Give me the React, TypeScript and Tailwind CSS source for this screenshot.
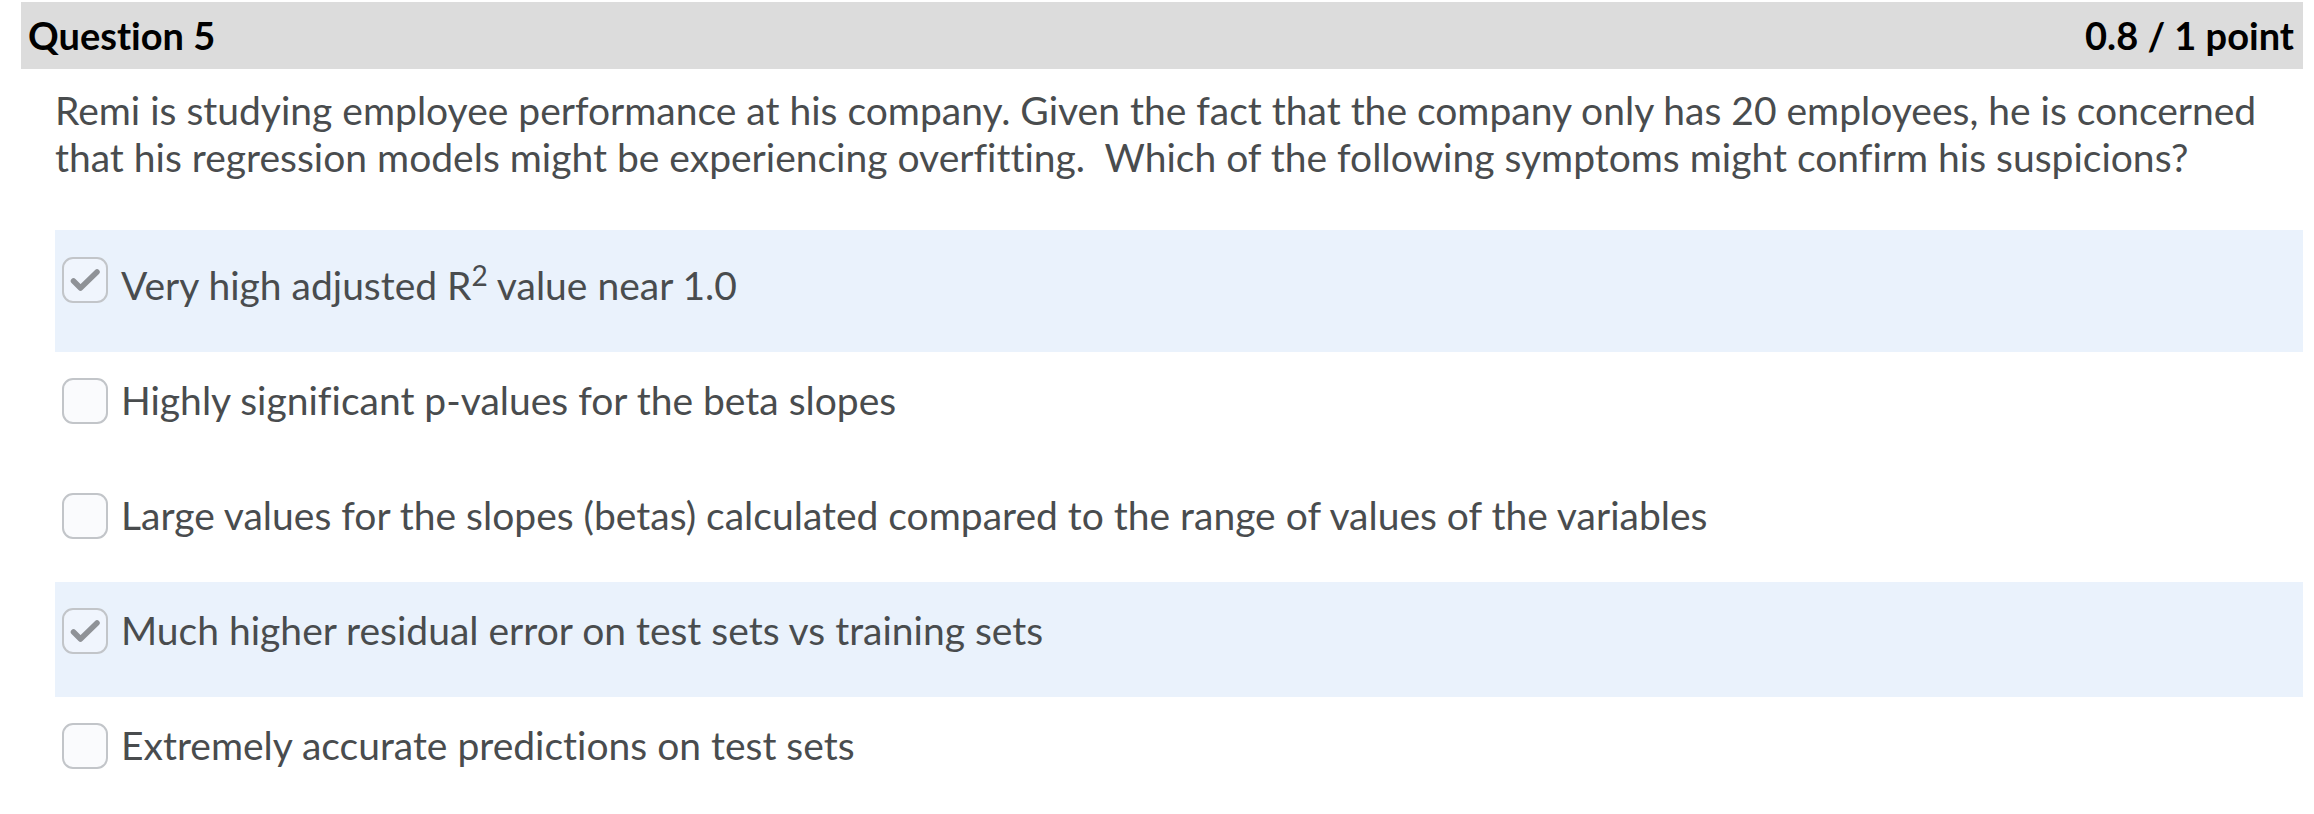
import React from "react";

function Check({ checked }: { checked: boolean }) {
  return (
    <div
      className={
        "flex h-[46px] w-[46px] shrink-0 items-center justify-center rounded-[11px] border-2 border-[#c2c5c9] " +
        (checked ? "bg-[#f0f5fd]" : "bg-[#fafbfd]")
      }
    >
      {checked && (
        <svg width="46" height="46" viewBox="0 0 46 46" className="-m-[2px]">
          <path
            d="M11.5 24 L18.5 31 L35 15"
            fill="none"
            stroke="#8f9297"
            strokeWidth="5.5"
            strokeLinecap="round"
            strokeLinejoin="round"
          />
        </svg>
      )}
    </div>
  );
}

function Option({
  checked,
  children,
  tall,
}: {
  checked: boolean;
  children: React.ReactNode;
  tall?: boolean;
}) {
  return (
    <div
      className={
        "flex items-start pl-[7px] pt-[25px] pb-[43px] " +
        (checked ? "bg-[#eaf2fc]" : "bg-white")
      }
    >
      <div className={tall ? "mt-[2px]" : "mt-[1px]"}>
        <Check checked={checked} />
      </div>
      <div
        className={
          "ml-[13px] text-[39px] leading-[47px] text-[#494c4e] " +
          (tall ? "pt-[7px]" : "")
        }
      >
        {children}
      </div>
    </div>
  );
}

export default function App() {
  return (
    <div
      className="min-h-[814px] bg-white pl-[21px] pr-[11px] pt-[2px] [font-variant-ligatures:none]"
      style={{ fontFamily: "Lato, 'Open Sans', sans-serif" }}
    >
      <div className="flex h-[67px] items-center justify-between bg-[#dcdcdc] pl-[7px] pr-[9px]">
        <span className="text-[38px] font-bold text-black">Question 5</span>
        <span className="text-[38px] font-bold text-black">0.8 / 1 point</span>
      </div>
      <div className="ml-[34px]">
        <p className="mt-[18px] text-[39px] leading-[47px] text-[#494c4e]">
          Remi is studying employee performance at his company. Given the fact
          that the company only has 20 employees, he is concerned that his
          regression models might be experiencing overfitting.&nbsp; Which of the
          following symptoms might confirm his suspicions?
        </p>
        <div className="mt-[49px] flex flex-col">
          <Option checked tall>
            Very high adjusted R
            <sup className="text-[28px]">2</sup> value near 1.0
          </Option>
          <Option checked={false}>
            Highly significant p-values for the beta slopes
          </Option>
          <Option checked={false}>
            Large values for the slopes (betas) calculated compared to the range
            of values of the variables
          </Option>
          <Option checked>
            Much higher residual error on test sets vs training sets
          </Option>
          <Option checked={false}>
            Extremely accurate predictions on test sets
          </Option>
        </div>
      </div>
    </div>
  );
}
